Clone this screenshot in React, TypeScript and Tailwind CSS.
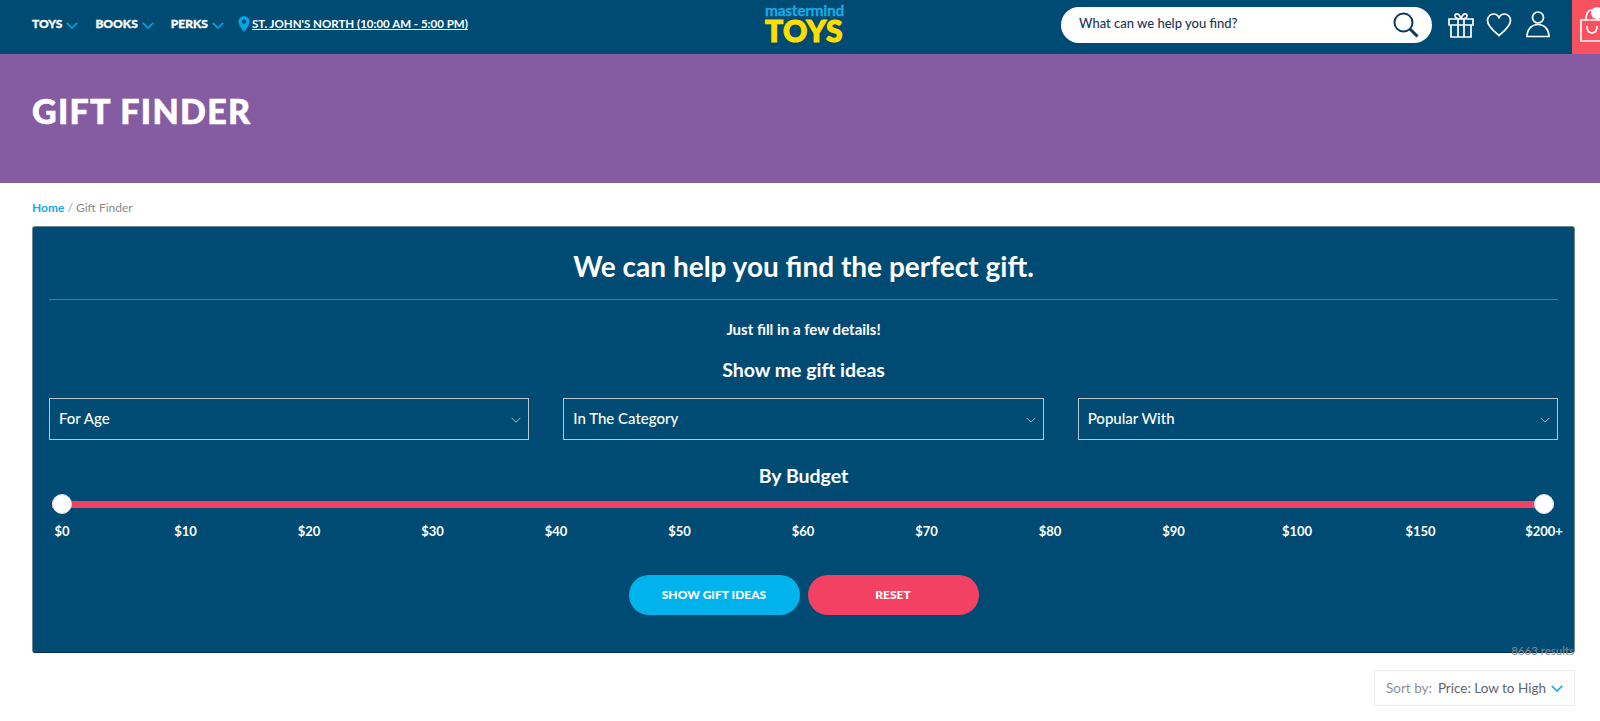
import React from 'react';

const navItems = ['TOYS', 'BOOKS', 'PERKS'];
const budgets = ['$0', '$10', '$20', '$30', '$40', '$50', '$60', '$70', '$80', '$90', '$100', '$150', '$200+'];
const filters = ['For Age', 'In The Category', 'Popular With'];

function Chevron({ className }: { className?: string }) {
    return (
        <svg viewBox="0 0 16 9" fill="none" stroke="currentColor" strokeWidth="1.3" className={className}>
            <path d="M1 1l7 7 7-7" />
        </svg>
    );
}

function Header() {
    return (
        <header className="flex h-[54px] items-start bg-[#004b73] text-white">
            <nav className="flex h-[48px] w-[765px] items-center pl-[32px] text-[12px] font-black">
                {navItems.map((item, i) => (
                    <div key={item} className={`flex items-center gap-[4px] ${i === 2 ? 'mr-[14px]' : 'mr-[17px]'}`}>
                        <span className="[-webkit-text-stroke:0.3px_white]">{item}</span>
                        <Chevron className="mt-[2px] h-[7px] w-[12px] stroke-[2] text-[#00a6e0]" />
                    </div>
                ))}
                <svg viewBox="0 0 12 16" className="mr-[2px] h-[16px] w-[12px] text-[#00a6e0]">
                    <path fill="currentColor" fillRule="evenodd" d="M6 0a5.6 5.6 0 0 1 5.6 5.6C11.6 9.5 6 16 6 16S.4 9.5.4 5.6A5.6 5.6 0 0 1 6 0zm0 3.4a2.2 2.2 0 1 0 0 4.4 2.2 2.2 0 0 0 0-4.4z" />
                </svg>
                <a className="text-[11.5px] font-bold whitespace-nowrap underline">ST. JOHN'S NORTH (10:00 AM - 5:00 PM)</a>
            </nav>
            <div className="flex w-[296px] flex-col pt-[4px]">
                <span className="text-[15.5px] leading-[13px] font-bold tracking-[-0.3px] text-[#1ba9e1] [-webkit-text-stroke:0.3px_#1ba9e1]">mastermind</span>
                <span className="text-[30px] leading-[27px] font-black tracking-[0.5px] text-[#ffdd00] [-webkit-text-stroke:1.2px_#ffdd00]">TOYS</span>
            </div>
            <div className="mt-[7px] flex h-[36px] w-[371px] items-center justify-between rounded-full bg-white pr-[13px] pl-[18px] text-[13px] font-medium text-[#1c3557]">
                <span className="-mt-[2px]">What can we help you find?</span>
                <svg viewBox="0 0 26 26" fill="none" stroke="#0b3a5c" className="h-[26px] w-[26px]">
                    <circle cx="10.5" cy="10.5" r="9" strokeWidth="2" />
                    <path d="M17 17l7.5 7.5" strokeWidth="3" />
                </svg>
            </div>
            <div className="mt-[11px] ml-[16px] flex items-center gap-[12px]">
                <svg viewBox="0 0 26 26" fill="none" stroke="white" strokeWidth="1.7" className="h-[26px] w-[26px]">
                    <path d="M1 7h24v6H1zM3 13v12h20V13M10 7v18M16 7v18M13 7C9 7 7 5.5 7 3.5S11 0 13 7zM13 7c4 0 6-1.5 6-3.5S15 0 13 7z" />
                </svg>
                <svg viewBox="0 0 26 24" fill="none" stroke="white" strokeWidth="1.7" className="h-[24px] w-[26px]">
                    <path d="M13 22.5C9 19 1.5 13.5 1.5 7.5 1.5 3.5 4.5 1 7.5 1c2.5 0 4.5 1.5 5.5 3.5C14 2.5 16 1 18.5 1c3 0 6 2.5 6 6.5 0 6-7.5 11.5-11.5 15z" />
                </svg>
                <svg viewBox="0 0 26 27" fill="none" stroke="white" strokeWidth="1.7" className="ml-[1px] h-[27px] w-[26px]">
                    <circle cx="13" cy="6.5" r="5.5" />
                    <path d="M2 25.5c0-7 4.5-12 11-12s11 5 11 12z" />
                </svg>
            </div>
            <div className="relative ml-[21px] h-[54px] flex-1 overflow-hidden bg-[#f9515f]">
                <svg viewBox="0 0 24 33" fill="none" stroke="white" strokeWidth="1.7" className="absolute top-[9px] left-[8px] h-[33px] w-[24px]">
                    <path d="M1 11h22v21H1zM6 11C6 5 8 1 12 1s6 4 6 10M7 17c0 5 2.5 7 5 7s5-2 5-7" />
                </svg>
                <div className="absolute top-[7px] left-[19px] h-[12px] w-[12px] rounded-full bg-white" />
            </div>
        </header>
    );
}

function SelectBox({ label }: { label: string }) {
    return (
        <div className="flex h-[42px] items-center justify-between border border-[#b9c6d0] pr-[7px] pl-[9px] text-[15px] font-medium text-white">
            <span className="-mt-[1px]">{label}</span>
            <Chevron className="mt-[2px] h-[6px] w-[10px] text-[#c5d0d8]" />
        </div>
    );
}

function GiftFinder() {
    return (
        <section className="mr-[25px] ml-[32px] h-[427px] rounded-[3px] border border-[#6e8697] border-b-[#00304d] bg-[#004b73] px-[16px] text-white">
            <h2 className="pt-[21px] pb-[15px] text-center text-[28px] leading-[36px] font-bold">We can help you find the perfect gift.</h2>
            <div className="h-px bg-[#0d93c4]" />
            <p className="mt-[20px] text-center text-[15px] leading-[18px] font-bold">Just fill in a few details!</p>
            <h3 className="mt-[19px] text-center text-[19.5px] leading-[26px] font-bold">Show me gift ideas</h3>
            <div className="mt-[15px] grid grid-cols-3 gap-x-[34px]">
                {filters.map((f) => (
                    <SelectBox key={f} label={f} />
                ))}
            </div>
            <h3 className="mt-[23px] text-center text-[19.5px] leading-[26px] font-bold">By Budget</h3>
            <div className="relative mt-[5px] mr-[4px] ml-[3px] flex h-[20px] items-center">
                <div className="h-[7px] w-full bg-[#f24162]" />
                <div className="absolute left-0 h-[20px] w-[20px] rounded-full border border-[#d8dfe4] bg-white" />
                <div className="absolute right-0 h-[20px] w-[20px] rounded-full border border-[#d8dfe4] bg-white" />
            </div>
            <div className="mt-[8px] mr-[14px] ml-[13px] flex justify-between text-[13px] leading-[18px] font-bold">
                {budgets.map((b) => (
                    <span key={b} className="flex w-0 justify-center whitespace-nowrap">{b}</span>
                ))}
            </div>
            <div className="mt-[35px] flex justify-center gap-[8px] text-[12px] font-black">
                <button className="h-[40px] w-[171px] rounded-full bg-[#00b3ec]">SHOW GIFT IDEAS</button>
                <button className="h-[40px] w-[171px] rounded-full bg-[#f24162]">RESET</button>
            </div>
        </section>
    );
}

export default function App() {
    return (
        <div className="h-[721px] overflow-hidden bg-white font-['Lato',sans-serif]">
            <Header />
            <div className="flex h-[129px] items-start bg-[#855ca1] pt-[34px] pl-[32px] text-[34px] leading-[46px] font-black tracking-[1.3px] text-white [-webkit-text-stroke:0.6px_white]">
                <h1>GIFT FINDER</h1>
            </div>
            <div className="h-[43px] pt-[17px] pl-[32px] text-[12px] leading-[16px] text-[#8a8a8a]">
                <span className="font-bold text-[#1aa9e5]">Home</span>
                <span className="text-[#6aa9d8]"> / </span>
                Gift Finder
            </div>
            <GiftFinder />
            <div className="-mt-[10px] pr-[26px] text-right text-[11.5px] leading-[16px] text-[#8b8b8b]">8663 results</div>
            <div className="mt-[11px] flex justify-end pr-[25px]">
                <div className="flex h-[36px] w-[201px] items-center border border-[#ececec] pl-[11px] text-[13.5px] text-[#5f6470]">
                    <span className="mr-[6px] text-[#8b8f97]">Sort by:</span>
                    <span className="whitespace-nowrap">Price: Low to High</span>
                    <Chevron className="mt-[1px] ml-[5px] h-[7px] w-[12px] stroke-[2] text-[#1aa9e5]" />
                </div>
            </div>
        </div>
    );
}
